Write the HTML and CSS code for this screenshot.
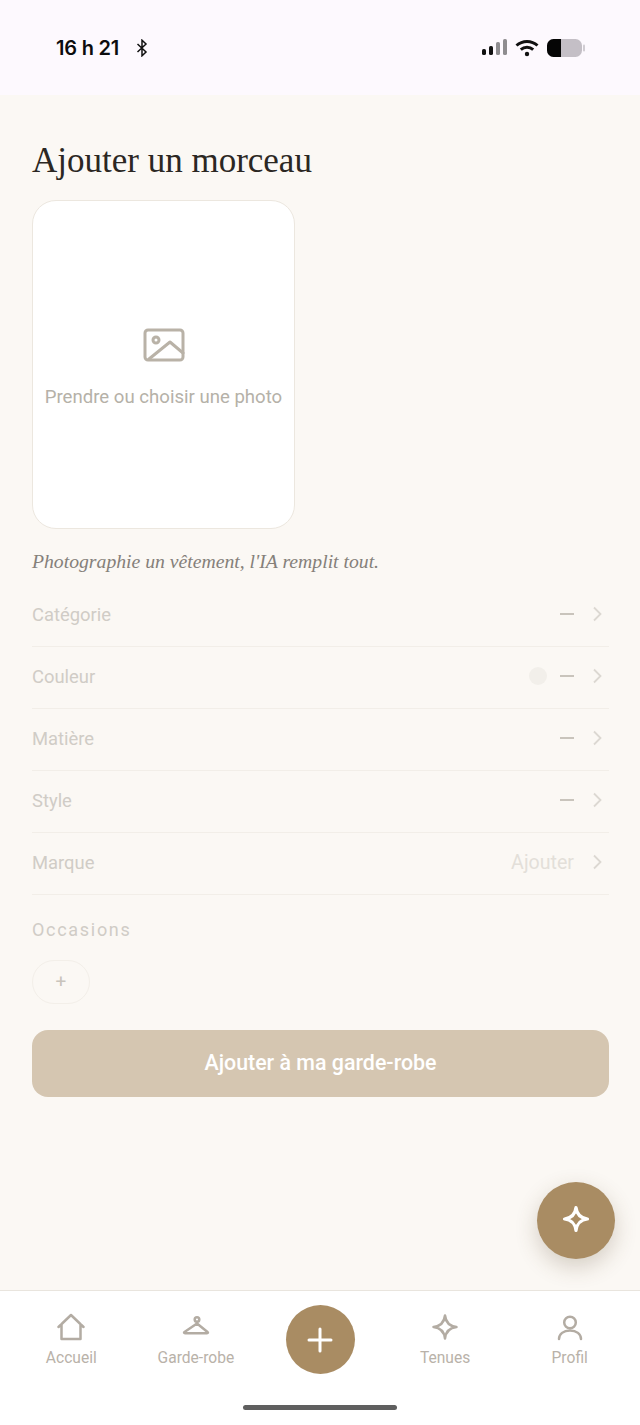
FILE: index.html
```html
<!DOCTYPE html>
<html lang="fr">
<head>
  <meta charset="UTF-8" />
  <meta name="viewport" content="width=device-width, initial-scale=1.0"/>
  <title>Ajouter un morceau</title>
  <link rel="stylesheet" href="styles.css">
</head>
<body>
  <div class="app">
    <header class="status-bar">
      <div class="status-left">
        <span class="time">16 h 21</span>
        <svg class="bt" width="12" height="18" viewBox="0 0 12 18" fill="none" stroke="#111" stroke-width="1.5"><path d="M1.5 5l8.5 8-4 3.8V1.2l4 3.8-8.5 8"/></svg>
      </div>
      <div class="status-right">
        <svg width="26" height="18" viewBox="0 0 26 18"><rect x="1" y="10" width="4" height="6" rx="1.6" fill="#111"/><rect x="8" y="7" width="4" height="9" rx="1.6" fill="#111"/><rect x="15" y="3" width="4" height="13" rx="1.6" fill="#8f8d90"/><rect x="22" y="0" width="4" height="16" rx="1.6" fill="#8f8d90"/></svg>
        <svg class="wifi" width="24" height="18" viewBox="0 0 24 18" fill="none" stroke="#111" stroke-width="3"><path d="M1.5 6.5C7.500 1 16.500 1 22.500 6.500"/><path d="M5.800 10.600c3.600-3.200 8.800-3.200 12.400 0"/><circle cx="12" cy="15" r="2.200" fill="#111" stroke="none"/></svg>
        <svg width="38" height="18" viewBox="0 0 38 18"><rect x="0" y="0" width="35" height="18" rx="6.500" fill="#c4bfc6"/><path d="M6.500 0H14V18H6.500A6.500 6.500 0 0 1 0 11.500V6.500A6.500 6.500 0 0 1 6.500 0Z" fill="#050505"/><rect x="36" y="5.500" width="2" height="7" rx="1" fill="#d0ccd2"/></svg>
      </div>
    </header>

    <main class="content">
      <h1 class="title">Ajouter un morceau</h1>

      <div class="photo-card">
        <svg width="42" height="34" viewBox="0 0 42 34" fill="none" stroke="#b9b2a7" stroke-width="3" stroke-linejoin="round" stroke-linecap="round"><rect x="2" y="2" width="38" height="30" rx="3"/><circle cx="13" cy="12" r="3"/><path d="M6 31l21-17 13 11"/></svg>
        <span class="photo-label">Prendre ou choisir une photo</span>
      </div>

      <p class="hint">Photographie un vêtement, l'IA remplit tout.</p>

      <ul class="fields">
        <li class="field">
          <span class="field-name">Catégorie</span>
          <span class="field-dash"></span>
          <svg class="chevron" width="9" height="16" viewBox="0 0 9 16" fill="none"><path d="M1 1.500L7.500 8 1 14.500"/></svg>
        </li>
        <li class="field">
          <span class="field-name">Couleur</span>
          <span class="swatch"></span>
          <span class="field-dash"></span>
          <svg class="chevron" width="9" height="16" viewBox="0 0 9 16" fill="none"><path d="M1 1.500L7.500 8 1 14.500"/></svg>
        </li>
        <li class="field">
          <span class="field-name">Matière</span>
          <span class="field-dash"></span>
          <svg class="chevron" width="9" height="16" viewBox="0 0 9 16" fill="none"><path d="M1 1.500L7.500 8 1 14.500"/></svg>
        </li>
        <li class="field">
          <span class="field-name">Style</span>
          <span class="field-dash"></span>
          <svg class="chevron" width="9" height="16" viewBox="0 0 9 16" fill="none"><path d="M1 1.500L7.500 8 1 14.500"/></svg>
        </li>
        <li class="field">
          <span class="field-name">Marque</span>
          <span class="field-value">Ajouter</span>
          <svg class="chevron" width="9" height="16" viewBox="0 0 9 16" fill="none"><path d="M1 1.500L7.500 8 1 14.500"/></svg>
        </li>
      </ul>

      <h2 class="section-label">Occasions</h2>
      <button class="chip-add">+</button>

      <button class="submit">Ajouter à ma garde-robe</button>

      <button class="fab" aria-label="IA">
        <svg width="28" height="28" viewBox="0 0 28 28" fill="none" stroke="#fff" stroke-width="3.200" stroke-linejoin="round"><path d="M14 2.500Q15.200 12.800 25.500 14 15.200 15.200 14 25.500 12.800 15.200 2.500 14 12.800 12.800 14 2.500Z"/></svg>
      </button>
    </main>

    <nav class="tabbar">
      <a class="tab">
        <svg class="tab-icon" width="28" height="28" viewBox="0 0 28 28"><path d="M1.500 14L14 2l12.500 12M4.500 11v15h19V11"/></svg>
        <span>Accueil</span>
      </a>
      <a class="tab">
        <svg class="tab-icon" width="28" height="28" viewBox="0 0 28 28"><circle cx="15" cy="6.500" r="2.300"/><path d="M15 9v1.500L2.500 19c-.8.600-.5 1.200.5 1.200h22c1 0 1.300-.6.500-1.200L15 10.500"/></svg>
        <span>Garde-robe</span>
      </a>
      <a class="tab tab-add" aria-label="Ajouter">
        <svg width="28" height="28" viewBox="0 0 28 28" stroke="#fff" stroke-width="3" stroke-linecap="round"><path d="M14 3v22M3 14h22"/></svg>
      </a>
      <a class="tab">
        <svg class="tab-icon" width="28" height="28" viewBox="0 0 28 28"><path d="M14 2.500Q15.200 12.800 25.500 14 15.200 15.200 14 25.500 12.800 15.200 2.500 14 12.800 12.800 14 2.500Z"/></svg>
        <span>Tenues</span>
      </a>
      <a class="tab">
        <svg class="tab-icon" width="28" height="28" viewBox="0 0 28 28"><circle cx="14" cy="9.500" r="5.800"/><path d="M3 26c0-5 4.500-8.500 11-8.500S25 21 25 26"/></svg>
        <span>Profil</span>
      </a>
      <div class="home-bar"></div>
    </nav>
  </div>
</body>
</html>
```

FILE: styles.css
```css
:root {
  --bg: #fbf8f4;
  --gold: #a98c63;
  --line: #f2eee8;
  --muted: #d0ccc6;
  --tab: #b9b2a9;
}

* {
  box-sizing: border-box;
}

body {
  margin: 0;
  font-family: Roboto, "Liberation Sans", sans-serif;
  background: var(--bg);
}

.app {
  display: flex;
  flex-direction: column;
  height: 1425px;
}

.status-bar {
  height: 95px;
  background: #fdf9fe;
  padding: 37px 56px 0;
  display: flex;
  justify-content: space-between;
  align-items: flex-start;
}

.status-left {
  display: flex;
  align-items: center;
  gap: 17px;
  height: 22px;
}

.time {
  font-family: Inter, Roboto, sans-serif;
  font-size: 20px;
  font-weight: 600;
  letter-spacing: -0.2px;
  color: #0c0c0e;
}

.status-right {
  display: flex;
  align-items: center;
  gap: 8px;
  height: 22px;
  margin-right: -1px;
}

.content {
  flex: 1;
  position: relative;
  padding: 45px 31px 0 32px;
}

.title {
  margin: 0;
  font-family: "Liberation Serif", serif;
  font-size: 35px;
  font-weight: 400;
  line-height: 42px;
  color: #2b2723;
}

.photo-card {
  width: 263px;
  height: 329px;
  margin-top: 18px;
  background: #fff;
  border: 1px solid #ece7df;
  border-radius: 24px;
  display: flex;
  flex-direction: column;
  align-items: center;
  justify-content: center;
  gap: 24px;
  padding-top: 7px;
}

.photo-label {
  font-size: 18.600px;
  color: #b5b1a8;
  white-space: nowrap;
}

.hint {
  margin: 19px 0 0;
  height: 37px;
  font-family: "Liberation Serif", serif;
  font-style: italic;
  font-size: 19.700px;
  line-height: 26px;
  color: #85807a;
}

.fields {
  list-style: none;
  margin: 0;
  padding: 0;
}

.field {
  height: 62px;
  display: flex;
  align-items: center;
  border-bottom: 1px solid var(--line);
  padding: 0 7px 3px 0;
}

.field-name {
  flex: 1;
  font-size: 18.400px;
  color: var(--muted);
}

.field-dash {
  width: 14px;
  height: 2px;
  background: #c9c4bc;
}

.swatch {
  width: 18px;
  height: 18px;
  border-radius: 50%;
  background: #f2efea;
  margin-right: 13px;
}

.field-value {
  font-size: 19.600px;
  color: #e3dfd9;
}

.chevron {
  margin-left: 19px;
  stroke: #dcd8d2;
  stroke-width: 1.800;
}

.section-label {
  margin: 24px 0 0;
  font-size: 18px;
  font-weight: 400;
  line-height: 22px;
  letter-spacing: 1.700px;
  color: var(--muted);
}

.chip-add {
  display: block;
  width: 58px;
  height: 44px;
  margin-top: 19px;
  padding: 0 0 2px;
  background: transparent;
  border: 1px solid #f3efe9;
  border-radius: 22px;
  font-family: inherit;
  font-size: 19px;
  color: #c9c4bc;
}

.submit {
  display: block;
  width: 100%;
  height: 67px;
  margin-top: 26px;
  padding: 0 0 2px;
  border: none;
  border-radius: 16px;
  background: #d5c6b1;
  color: #fff;
  font-family: inherit;
  font-size: 21.400px;
  font-weight: 500;
}

.fab {
  position: absolute;
  right: 25px;
  bottom: 31px;
  width: 78px;
  height: 77px;
  border: none;
  border-radius: 50%;
  background: var(--gold);
  box-shadow: 0 8px 22px rgba(90, 70, 40, 0.24);
  display: flex;
  align-items: center;
  justify-content: center;
  padding: 0 0 4px;
}

.tabbar {
  height: 135px;
  position: relative;
  background: #fff;
  border-top: 1px solid #e9e5de;
  display: grid;
  grid-template-columns: repeat(5, 1fr);
  align-items: start;
  padding: 22px 8px 0 9px;
}

.tab {
  display: flex;
  flex-direction: column;
  align-items: center;
  gap: 7px;
  font-size: 15.600px;
  line-height: 20px;
  color: var(--tab);
}

.tab-icon {
  fill: none;
  stroke: #b3aca3;
  stroke-width: 2.500;
  stroke-linejoin: round;
  stroke-linecap: round;
}

.tab-add {
  width: 69px;
  height: 69px;
  margin: -8px auto 0;
  border-radius: 50%;
  background: var(--gold);
  justify-content: center;
}

.home-bar {
  position: absolute;
  left: 243px;
  bottom: 15px;
  width: 154px;
  height: 5px;
  border-radius: 3px;
  background: #5f5f5f;
}
```
